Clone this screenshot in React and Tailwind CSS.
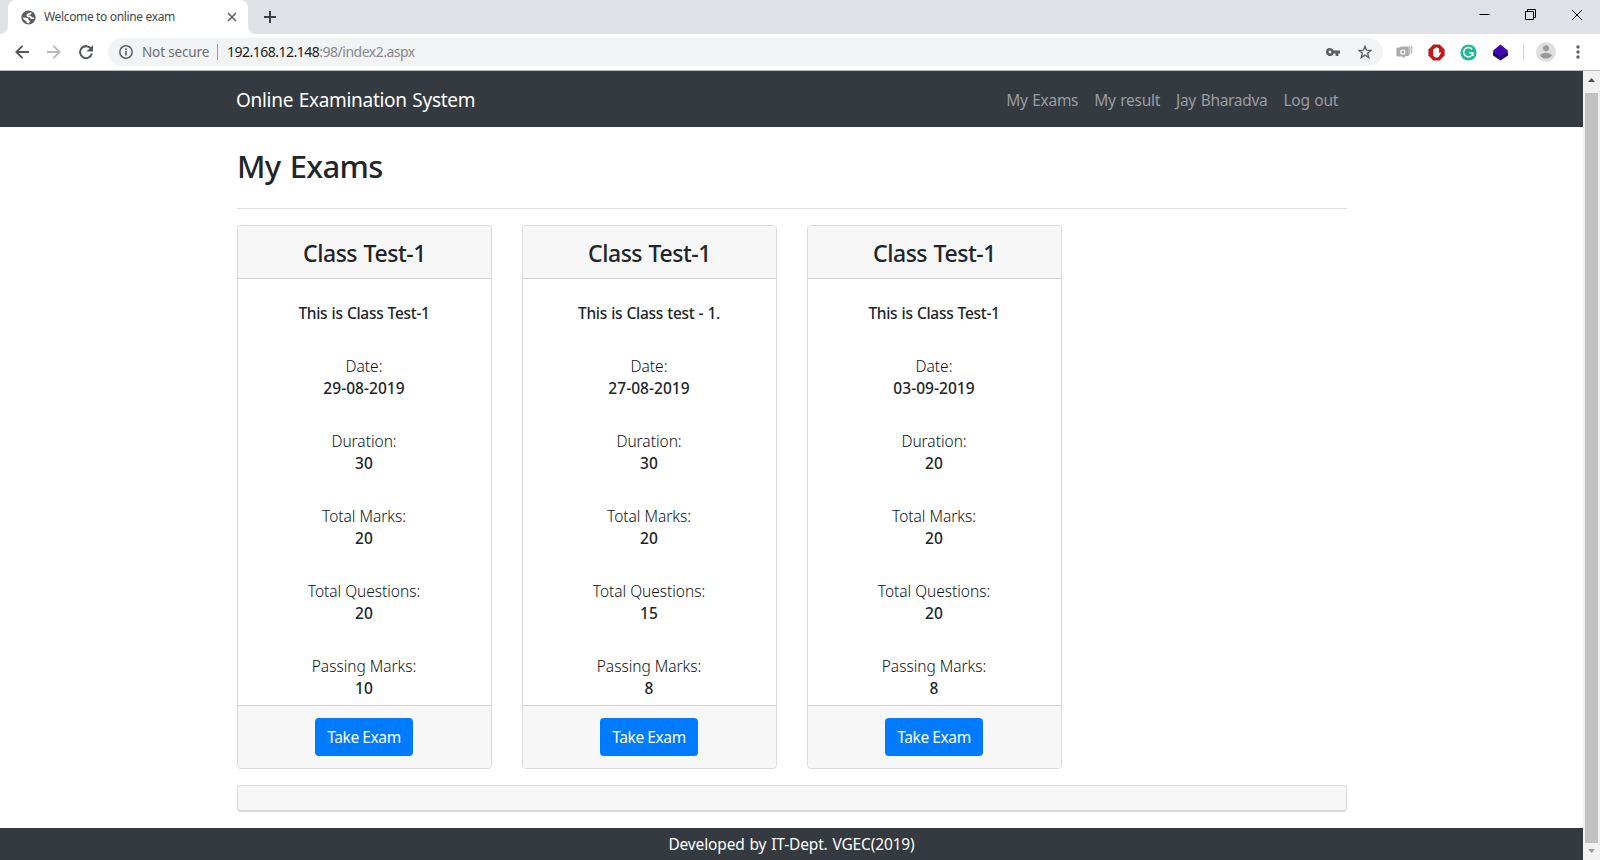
const exams = [
  { title: 'Class Test-1', text: 'This is Class Test-1', date: '29-08-2019', duration: 30, marks: 20, questions: 20, passing: 10 },
  { title: 'Class Test-1', text: 'This is Class test - 1.', date: '27-08-2019', duration: 30, marks: 20, questions: 15, passing: 8 },
  { title: 'Class Test-1', text: 'This is Class Test-1', date: '03-09-2019', duration: 20, marks: 20, questions: 20, passing: 8 },
];

function Globe() {
  return (
    <svg width="15" height="15" viewBox="0 0 15 15">
      <circle cx="7.5" cy="7.5" r="7.1" fill="#5a5e63" />
      <path d="M10 2.6 Q9.4 4 7.8 4.2 Q6.2 4.5 6.3 5.6 Q6.5 6.5 8 6.4 Q10 6.3 10 7.8 Q10.2 8.6 13 8" fill="none" stroke="#fff" strokeWidth="1.7" />
      <path d="M1.6 7.6 L5.6 7.8 Q7.6 8 7.5 9.6 Q7.4 10.6 8.9 10.8 L8.2 13.2 L5.8 13 Q5.9 11.7 5 11.1 Q2.4 10 1.6 7.6Z" fill="#fff" />
    </svg>
  );
}

function TabStrip() {
  return (
    <div className="flex h-[34px] shrink-0 bg-[#dee1e6]">
      <div className="flex w-[8px] items-end bg-white">
        <div className="h-full w-full rounded-br-[8px] bg-[#dee1e6]" />
      </div>
      <div className="flex w-[240px] items-center rounded-t-[8px] bg-white pl-[13px] pr-[11px]">
        <Globe />
        <span className="ml-[8px] grow whitespace-nowrap text-[12px] tracking-[-0.35px] text-[#45494d]">Welcome to online exam</span>
        <svg width="10" height="10" viewBox="0 0 10 10" stroke="#5f6368" strokeWidth="1.6"><path d="M1 1 L9 9 M9 1 L1 9" /></svg>
      </div>
      <div className="flex w-[8px] items-end bg-white">
        <div className="h-full w-full rounded-bl-[8px] bg-[#dee1e6]" />
      </div>
      <div className="flex grow items-center pl-[8px]">
        <svg width="12" height="12" viewBox="0 0 12 12" stroke="#3c4043" strokeWidth="2"><path d="M6 0 V12 M0 6 H12" /></svg>
      </div>
      <div className="flex h-[29px] items-center gap-[35px] pr-[17px]">
        <svg width="11" height="11" viewBox="0 0 11 11" stroke="#000"><path d="M0.5 5.5 H10.5" /></svg>
        <svg width="11" height="11" viewBox="0 0 11 11" fill="none" stroke="#000"><path d="M.5 2.5 H8.5 V10.5 H.5 Z M2.5 2.5 V.5 H10.5 V8.5 H8.5" /></svg>
        <svg width="12" height="12" viewBox="0 0 12 12" stroke="#000"><path d="M1 1 L11 11 M11 1 L1 11" /></svg>
      </div>
    </div>
  );
}

function Toolbar() {
  return (
    <div className="flex h-[37px] shrink-0 items-center border-b border-[#b6b9bb] bg-white pl-[15px]">
      <svg width="14" height="14" viewBox="0 0 14 14" fill="none" stroke="#55595e" strokeWidth="1.9"><path d="M14 7 H1.5 M7.5 .8 L1.3 7 L7.5 13.2" /></svg>
      <svg className="ml-[18px]" width="14" height="14" viewBox="0 0 14 14" fill="none" stroke="#b9bbbe" strokeWidth="1.9"><path d="M0 7 H12.5 M6.5 .8 L12.7 7 L6.5 13.2" /></svg>
      <svg className="ml-[18px]" width="14" height="14" viewBox="0 0 14 14" fill="none" stroke="#55595e" strokeWidth="2"><path d="M12.2 4 A6 6 0 1 0 12.9 8.6" /><path d="M14 0 V6.4 H7.6 Z" fill="#55595e" stroke="none" /></svg>
      <div className="ml-[15px] flex h-[28px] w-[1275px] items-center rounded-full bg-[#f1f3f4] pl-[11px] pr-[11px]">
        <svg width="14" height="14" viewBox="0 0 14 14" fill="none" stroke="#5f6368"><circle cx="7" cy="7" r="6.2" strokeWidth="1.5" /><path d="M7 6 V10.6 M7 3.3 V4.9" strokeWidth="1.6" /></svg>
        <span className="ml-[9px] w-[67px] whitespace-nowrap text-[13.5px] tracking-[-0.15px] text-[#6b6f74]">Not secure</span>
        <span className="ml-[8px] h-[16px] w-px bg-[#9b9ea2]" />
        <span className="ml-[9px] grow pb-px text-[14px] tracking-[-0.5px] text-[#85898d]"><span className="text-[#202124]">192.168.12.148</span>:98/index2.aspx</span>
        <svg width="14" height="8" viewBox="0 0 14 8" fill="#5a5e63"><path fillRule="evenodd" d="M4 0 A4 4 0 1 0 7.7 5.4 H9.6 V8 H12.4 V5.4 H14 V2.6 H7.7 A4 4 0 0 0 4 0 Z M4 2.6 A1.4 1.4 0 1 1 4 5.4 A1.4 1.4 0 1 1 4 2.6 Z" /></svg>
        <svg className="ml-[18px]" width="14" height="14" viewBox="0 0 14 14" fill="none" stroke="#5f6368" strokeWidth="1.4"><path d="M7 1.2 L8.5 5.2 L13 5.5 L9.6 8.3 L10.8 12.6 L7 10.2 L3.2 12.6 L4.4 8.3 L1 5.5 L5.5 5.2 Z" /></svg>
      </div>
      <svg className="ml-[13px]" width="17" height="14" viewBox="0 0 17 14"><path d="M1.8 2.4 H3.8 L4.6 1.4 H12.8 V11 H9.4 L8 13.2 L6.4 11.6 H1.8 Q.4 11.6 .4 10.2 V3.8 Q.4 2.4 1.8 2.4Z" fill="#acacac" /><path d="M12.8 1.4 H14.2 V9.8 H12.8Z M14.8 1 H16.4 V8.6 H14.8Z" fill="#bdbdbd" /><rect x="4.8" y="5" width="4" height="4" rx="1.6" fill="none" stroke="#fff" strokeWidth="1.2" /></svg>
      <svg className="ml-[15px]" width="17" height="17" viewBox="0 0 17 17"><path d="M5.4 .4 H11.6 L16.6 5.4 V11.6 L11.6 16.6 H5.4 L.4 11.6 V5.4Z" fill="#c4161c" /><path d="M5.2 5.4 Q5.8 4.8 6.4 5.4 L6.6 4 Q7.2 3.3 7.8 4 L8.2 3.4 Q8.8 2.8 9.4 3.4 L9.8 4.2 Q10.5 3.6 11.1 4.4 V9 L12.3 8.2 Q13.2 8.2 12.9 9 L11 12.4 Q10.2 13.4 9 13.4 H7.8 Q5.2 13.2 5.2 10.6Z" fill="#fff" /></svg>
      <svg className="ml-[15px]" width="17" height="17" viewBox="0 0 17 17"><circle cx="8.5" cy="8.5" r="8.1" fill="#20b994" /><path d="M12.1 5.3 A4.7 4.7 0 1 0 13 9 H9.4 M12.9 8.8 V12" fill="none" stroke="#fff" strokeWidth="1.4" /></svg>
      <svg className="ml-[15px]" width="17" height="17" viewBox="0 0 17 17"><path d="M8.5 4 L16 8.5 V11.4 L8.5 16.6 L1 11.4 V8.5Z" fill="#1d0b63" /><path d="M8.5 .4 L16.4 7 L8.5 13 L.6 7Z" fill="#4306b0" /></svg>
      <span className="ml-[14px] h-[16px] w-px bg-[#cfd1d4]" />
      <svg className="ml-[12px]" width="20" height="20" viewBox="0 0 20 20"><circle cx="10" cy="10" r="10" fill="#dedede" /><circle cx="10" cy="6.3" r="3" fill="#9a9a9a" /><path d="M4 13.5 Q6 10.7 10 10.7 Q14 10.7 16 13.5 Q14 16.6 10 16.6 Q6 16.6 4 13.5Z" fill="#9a9a9a" /></svg>
      <svg className="ml-[20px]" width="4" height="14" viewBox="0 0 4 14" fill="#5f6368"><circle cx="2" cy="2" r="1.7" /><circle cx="2" cy="7" r="1.7" /><circle cx="2" cy="12" r="1.7" /></svg>
    </div>
  );
}

function Field({ label, value }) {
  return (
    <div className="mb-[31px] leading-[22px]">
      <div className="text-[15.5px] font-light tracking-[-0.02px] text-[#101316]">{label}</div>
      <div className="text-[15.5px] font-medium tracking-[0.05px]">{value}</div>
    </div>
  );
}

function ExamCard({ exam }) {
  return (
    <div className="flex h-[544px] w-[255px] flex-col overflow-hidden rounded-[4px] border border-[#dadada] bg-white text-center">
      <div className="h-[53px] border-b border-[#d3d3d3] bg-[#f7f7f7] pt-[13px]">
        <h4 className="text-[23px] font-medium leading-[29px] tracking-[-0.45px] [word-spacing:1px]">{exam.title}</h4>
      </div>
      <div className="h-[426px] pr-px pt-[22px]">
        <p className="mb-[30px] text-[15.5px] font-medium leading-[24px] tracking-[-0.3px] [word-spacing:0.5px]">{exam.text}</p>
        <Field label="Date:" value={exam.date} />
        <Field label="Duration:" value={exam.duration} />
        <Field label="Total Marks:" value={exam.marks} />
        <Field label="Total Questions:" value={exam.questions} />
        <Field label="Passing Marks:" value={exam.passing} />
      </div>
      <div className="h-[63px] border-t border-[#d3d3d3] bg-[#f7f7f7] pr-px pt-[12px]">
        <button className="h-[38px] w-[98px] rounded-[4px] bg-[#007bff] pt-[2px] text-[15.5px] tracking-[-0.4px] text-white">Take Exam</button>
      </div>
    </div>
  );
}

function Scrollbar() {
  return (
    <div className="flex w-[17px] flex-col items-center bg-[#f1f1f1]">
      <div className="flex h-[22px] items-start pt-[7px]">
        <svg width="7" height="4" viewBox="0 0 7 4" fill="#505050"><path d="M0 4 L3.5 0 L7 4Z" /></svg>
      </div>
      <div className="w-[13px] grow bg-[#c1c1c1]" />
      <div className="flex h-[17px] items-start pt-[6px]">
        <svg width="7" height="4" viewBox="0 0 7 4" fill="#9a9a9a"><path d="M0 0 L3.5 4 L7 0Z" /></svg>
      </div>
    </div>
  );
}

export default function App() {
  return (
    <div className="flex h-[860px] w-[1600px] flex-col overflow-hidden bg-white font-['Noto_Sans',sans-serif] text-[#212529]">
      <TabStrip />
      <Toolbar />
      <div className="flex grow">
        <div className="flex w-[1583px] flex-col">
          <nav className="flex h-[56px] items-center justify-between bg-[#343a40] pl-[236px] pr-[245px] pt-[2px]">
            <span className="text-[19px] tracking-[-0.3px] text-white [word-spacing:1px]">Online Examination System</span>
            <div className="flex gap-[16px] pt-px text-[15.5px] tracking-[-0.3px] text-[#9a9da0] [word-spacing:1px]">
              <a>My Exams</a>
              <a>My result</a>
              <a>Jay Bharadva</a>
              <a>Log out</a>
            </div>
          </nav>
          <main className="flex w-[1347px] grow flex-col pl-[237px]">
            <h2 className="mt-[20px] text-[31px] font-medium leading-[38px] tracking-[-0.7px] [word-spacing:2px]">My Exams</h2>
            <div className="mt-[23px] h-px bg-[#e0e0e0]" />
            <div className="mt-[16px] flex gap-[30px]">
              {exams.map((exam, i) => <ExamCard key={i} exam={exam} />)}
            </div>
            <div className="mt-[16px] h-[27px] rounded-[4px] border border-b-2 border-[#dadada] bg-[#f7f7f7]" />
          </main>
          <footer className="flex h-[32px] items-center justify-center bg-[#343a40] pt-[2px] text-[15.5px] tracking-[-0.15px] text-white [word-spacing:1px]">
            Developed by IT-Dept. VGEC(2019)
          </footer>
        </div>
        <Scrollbar />
      </div>
    </div>
  );
}
